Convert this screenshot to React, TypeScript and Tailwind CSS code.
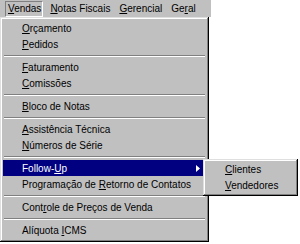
import React from "react";

const U = ({ children }: { children: React.ReactNode }) => (
  <span className="underline underline-offset-[1px] decoration-1">{children}</span>
);

type Item = { kind: "item"; label: React.ReactNode; active?: boolean; sub?: boolean } | { kind: "sep" };

const items: Item[] = [
  { kind: "item", label: <><U>O</U>rçamento</> },
  { kind: "item", label: <><U>P</U>edidos</> },
  { kind: "sep" },
  { kind: "item", label: <><U>F</U>aturamento</> },
  { kind: "item", label: <><U>C</U>omissões</> },
  { kind: "sep" },
  { kind: "item", label: <><U>B</U>loco de Notas</> },
  { kind: "sep" },
  { kind: "item", label: <><U>A</U>ssistência Técnica</> },
  { kind: "item", label: <><U>N</U>úmeros de Série</> },
  { kind: "sep" },
  { kind: "item", label: <>Follow-<U>U</U>p</>, active: true, sub: true },
  { kind: "item", label: <>Programação de <U>R</U>etorno de Contatos</> },
  { kind: "sep" },
  { kind: "item", label: <>Cont<U>r</U>ole de Preços de Venda</> },
  { kind: "sep" },
  { kind: "item", label: <>Alíquota <U>I</U>CMS</> },
];

const bevel =
  "shadow-[inset_-1px_-1px_0_0_#000000,inset_1px_1px_0_0_#dfdfdf,inset_-2px_-2px_0_0_#808080,inset_2px_2px_0_0_#ffffff]";

export default function App() {
  return (
    <div
      className="relative w-[300px] h-[244px] bg-white overflow-hidden text-[10px] text-black"
      style={{ fontFamily: '"Liberation Sans", Arial, sans-serif' }}
    >
      {/* Menu bar */}
      <div className="flex items-center w-[211px] h-[17px] bg-[#c0c0c0]">
        <div className="ml-[5px] h-[16px] flex items-center pl-[2px] pr-[1px] pt-[1px] border border-t-[#808080] border-l-[#808080] border-b-white border-r-white leading-none">
          <span><U>V</U>endas</span>
        </div>
        <div className="flex items-center gap-[9px] ml-[7px] leading-none">
          <span><U>N</U>otas Fiscais</span>
          <span><U>G</U>erencial</span>
          <span>Ge<U>r</U>al</span>
        </div>
      </div>

      {/* Dropdown */}
      <div className={`absolute left-0 top-[17px] w-[209px] h-[225px] bg-[#c0c0c0] p-[3px] flex flex-col ${bevel}`}>
        {items.map((it, i) =>
          it.kind === "sep" ? (
            <div key={i} className="h-[7px] flex flex-col justify-center px-[1px]">
              <div className="h-px bg-[#808080]" />
              <div className="h-px bg-white" />
            </div>
          ) : (
            <div
              key={i}
              className={`relative h-[16px] flex items-center pl-[19px] whitespace-nowrap ${
                it.active ? "bg-[#000080] text-white" : ""
              }`}
            >
              <span>{it.label}</span>
              {it.sub && (
                <svg className="absolute right-[6px] top-[5px]" width="4" height="7" viewBox="0 0 4 7">
                  <path d="M0 0 L4 3.5 L0 7 Z" fill="#ffffff" />
                </svg>
              )}
            </div>
          )
        )}
      </div>

      {/* Submenu */}
      <div className={`absolute left-[203px] top-[159px] w-[95px] h-[37px] bg-[#c0c0c0] p-[3px] flex flex-col ${bevel}`}>
        <div className="h-[16px] flex items-center pl-[19px]">
          <span><U>C</U>lientes</span>
        </div>
        <div className="h-[16px] flex items-center pl-[19px]">
          <span><U>V</U>endedores</span>
        </div>
      </div>
    </div>
  );
}
